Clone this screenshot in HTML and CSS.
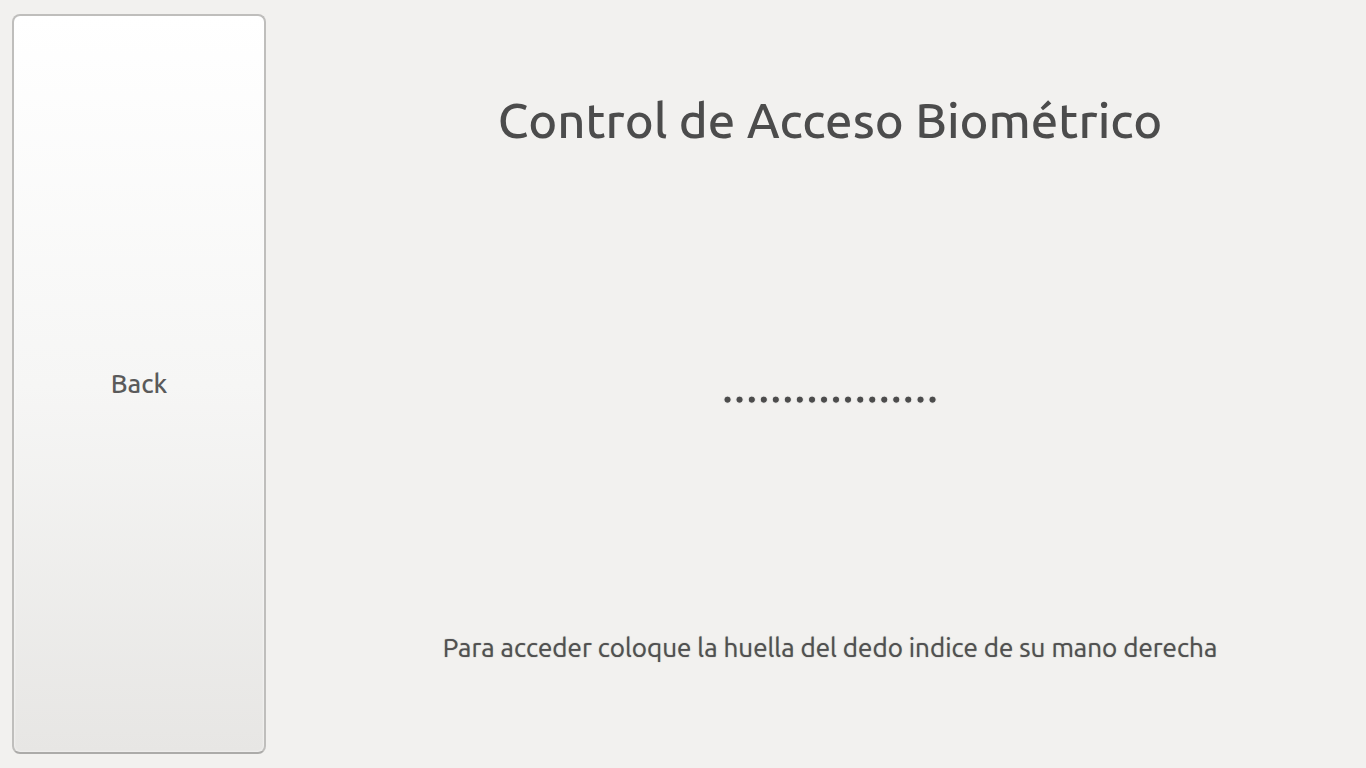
FILE: index.html
```html
<!DOCTYPE html>
<html lang="es">
<head>
<meta charset="utf-8">
<title>Control de Acceso Biométrico</title>
<link rel="stylesheet" href="styles.css">
</head>
<body>
<div class="app">
  <button class="back" type="button">Back</button>
  <main class="panel">
    <h1 class="title">Control de Acceso Biométrico</h1>
    <p class="status">..................</p>
    <p class="hint">Para acceder coloque la huella del dedo indice de su mano derecha</p>
  </main>
</div>
</body>
</html>
```
FILE: styles.css
```css
* {
  box-sizing: border-box;
}

body {
  margin: 0;
  background: #f2f1ef;
  color: #4c4c4c;
  font-family: Ubuntu, "Noto Sans", sans-serif;
}

.app {
  display: grid;
  grid-template-columns: 8fr 33fr;
  column-gap: 40px;
  min-height: 100vh;
  padding: 14px 12px;
}

.back {
  border: 2px solid #bfbebc;
  border-bottom-color: #acaba9;
  border-radius: 8px;
  background: linear-gradient(#ffffff, #f6f6f5 50%, #e7e6e4);
  box-shadow: inset 0 0 2px 1px rgba(255, 255, 255, 0.4);
  color: #5a5a5a;
  font: 500 26px/32px Ubuntu, "Noto Sans", sans-serif;
}

.panel {
  display: grid;
  grid-template-rows: 2fr 3fr 2fr;
  align-items: center;
  justify-items: center;
  text-align: center;
}

.title,
.status,
.hint {
  margin: 0;
  font-weight: 400;
}

.title {
  font-size: 49px;
  font-weight: 500;
  line-height: 64px;
}

.status {
  font-size: 49px;
  line-height: 64px;
  text-shadow: 0 0 1px #4c4c4c;
}

.hint {
  color: #505050;
  font-size: 26px;
  line-height: 32px;
  text-shadow: 0 0 1px rgba(80, 80, 80, 0.7);
}
```
